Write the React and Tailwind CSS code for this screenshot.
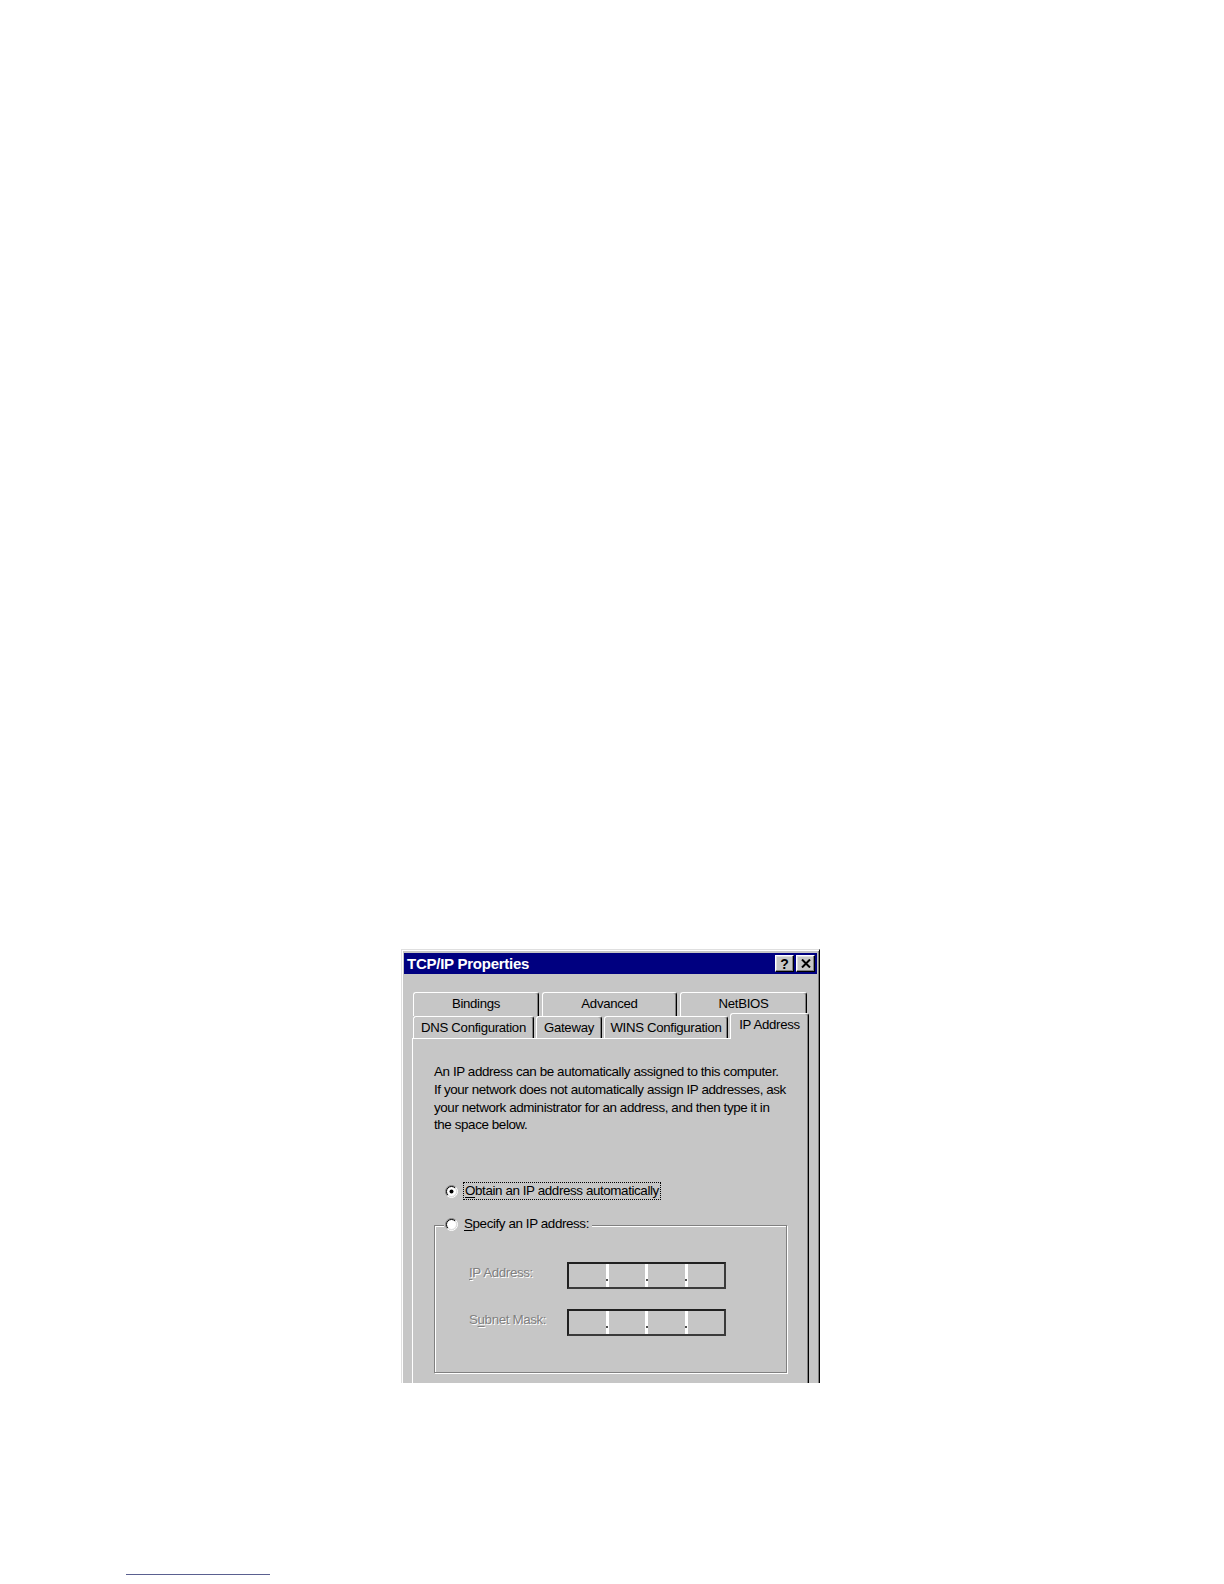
import React from "react";

function Radio({ checked }) {
  return (
    <svg width="13" height="13" viewBox="0 0 13 13" className="shrink-0">
      <circle cx="6.5" cy="6.5" r="5" fill="#ffffff" />
      <path d="M2.257 10.743A6 6 0 0 1 10.743 2.257" stroke="#808080" fill="none" />
      <path d="M10.743 2.257A6 6 0 0 1 2.257 10.743" stroke="#ffffff" fill="none" />
      <path d="M2.964 10.036A5 5 0 0 1 10.036 2.964" stroke="#000000" fill="none" />
      <path d="M10.036 2.964A5 5 0 0 1 2.964 10.036" stroke="#dfdfdf" fill="none" />
      {checked && <circle cx="6.5" cy="6.5" r="2" fill="#000000" />}
    </svg>
  );
}

function Sep() {
  return (
    <div className="w-[3px] bg-white flex flex-col items-center justify-end pb-[6px]">
      <div className="w-[2px] h-[2px] bg-[#505050]" />
    </div>
  );
}

function IpBox() {
  return (
    <div className="flex w-[159px] h-[27px] border-2 border-[#202020] border-r-[#3a3a3a] border-b-[#3a3a3a] bg-[#c6c6c6] shrink-0">
      <div className="flex-1" />
      <Sep />
      <div className="flex-1" />
      <Sep />
      <div className="flex-1" />
      <Sep />
      <div className="flex-1" />
    </div>
  );
}

function Tab({ children, className }) {
  return (
    <div
      className={
        "flex justify-center bg-[#c6c6c6] border-l border-t border-r border-white border-r-black rounded-t-[3px] shadow-[inset_-1px_0_0_#808080] whitespace-nowrap text-[13.2px] tracking-[-0.3px] text-black shrink-0 " +
        className
      }
    >
      {children}
    </div>
  );
}

export default function App() {
  return (
    <div className="w-[1224px] h-[1584px] bg-white flex flex-col overflow-hidden font-['Liberation_Sans',Arial,sans-serif]">
      <div className="ml-[401px] mt-[949px] w-[419px] h-[434px] overflow-hidden shrink-0">
        <div className="h-[490px] bg-[#c6c6c6] border border-[#dfdfdf] border-r-black border-b-black shadow-[inset_1px_1px_0_#ffffff,inset_-1px_-1px_0_#808080] pt-[3px] px-[2px] flex flex-col">
          {/* Title bar */}
          <div className="h-[21px] bg-[#000080] flex items-center justify-between pl-[3px] pr-[2px] shrink-0">
            <span className="text-white font-bold text-[15px] tracking-[-0.25px] leading-none">
              TCP/IP Properties
            </span>
            <div className="flex gap-[2px]">
              <div className="w-[19px] h-[17px] bg-[#c6c6c6] border border-white border-r-black border-b-black shadow-[inset_-1px_-1px_0_#808080,inset_1px_1px_0_#dfdfdf] flex items-center justify-center">
                <span className="text-black font-bold text-[14px] leading-none">?</span>
              </div>
              <div className="w-[19px] h-[17px] bg-[#c6c6c6] border border-white border-r-black border-b-black shadow-[inset_-1px_-1px_0_#808080,inset_1px_1px_0_#dfdfdf] flex items-center justify-center">
                <svg width="10" height="9" viewBox="0 0 10 9">
                  <path d="M1 0.5 L9 8.5 M9 0.5 L1 8.5" stroke="#000" strokeWidth="2" />
                </svg>
              </div>
            </div>
          </div>

          {/* Tabs */}
          <div className="mt-[18px] ml-[8px] mr-[8px] flex flex-col">
            <div className="flex h-[24px] pl-px gap-[3px]">
              <Tab className="w-[126px] h-[24px] pt-[2px] leading-[18px]">Bindings</Tab>
              <Tab className="w-[135px] h-[24px] pt-[2px] leading-[18px]">Advanced</Tab>
              <Tab className="w-[127px] h-[24px] pt-[2px] leading-[18px]">NetBIOS</Tab>
            </div>
            <div className="flex h-[22px] items-end pl-px gap-[2px]">
              <Tab className="w-[121px] h-[22px] pt-[2px] leading-[18px]">DNS Configuration</Tab>
              <Tab className="w-[66px] h-[22px] pt-[2px] leading-[18px]">Gateway</Tab>
              <Tab className="w-[124px] h-[22px] pt-[2px] leading-[18px]">WINS Configuration</Tab>
              <Tab className="w-[79px] h-[26px] -mb-px relative z-10 pt-[2px] leading-[18px]">IP Address</Tab>
            </div>

            {/* Panel */}
            <div className="h-[370px] border-l border-t border-r border-white border-r-black shadow-[inset_-1px_0_0_#808080] pl-[21px] pt-[24px] pr-[20px] flex flex-col text-[13.4px] tracking-[-0.4px] text-black">
              <div className="leading-[17.8px] whitespace-nowrap">
                <div>An IP address can be automatically assigned to this computer.</div>
                <div>If your network does not automatically assign IP addresses, ask</div>
                <div>your network administrator for an address, and then type it in</div>
                <div>the space below.</div>
              </div>

              <div className="mt-[48px] ml-[11px] flex items-center gap-[5px] h-[18px]">
                <Radio checked />
                <div className="border border-dotted border-black px-px leading-[16px] whitespace-nowrap">
                  <span className="underline underline-offset-2">O</span>btain an IP address automatically
                </div>
              </div>

              <div className="mt-[25px] w-[353px] h-[148px] border border-[#808080] shadow-[1px_1px_0_#ffffff,inset_1px_1px_0_#ffffff] flex flex-col">
                <div className="-mt-[11px] ml-[9px] self-start bg-[#c6c6c6] flex items-center gap-[6px] pl-px pr-[3px] h-[18px]">
                  <Radio />
                  <span className="leading-[16px] whitespace-nowrap">
                    <span className="underline underline-offset-2">S</span>pecify an IP address:
                  </span>
                </div>

                <div className="mt-[29px] ml-[34px] flex items-center">
                  <span className="w-[98px] text-[#808080] [text-shadow:1px_1px_0_#ffffff] -mt-[5px] whitespace-nowrap">
                    <span className="underline underline-offset-2">I</span>P Address:
                  </span>
                  <IpBox />
                </div>

                <div className="mt-[20px] ml-[34px] flex items-center">
                  <span className="w-[98px] text-[#808080] [text-shadow:1px_1px_0_#ffffff] -mt-[5px] whitespace-nowrap">
                    S<span className="underline underline-offset-2">u</span>bnet Mask:
                  </span>
                  <IpBox />
                </div>
              </div>
            </div>
          </div>
        </div>
      </div>

      <div className="ml-[126px] mt-[191px] w-[144px] h-px bg-[#5a6090] shrink-0" />
    </div>
  );
}
